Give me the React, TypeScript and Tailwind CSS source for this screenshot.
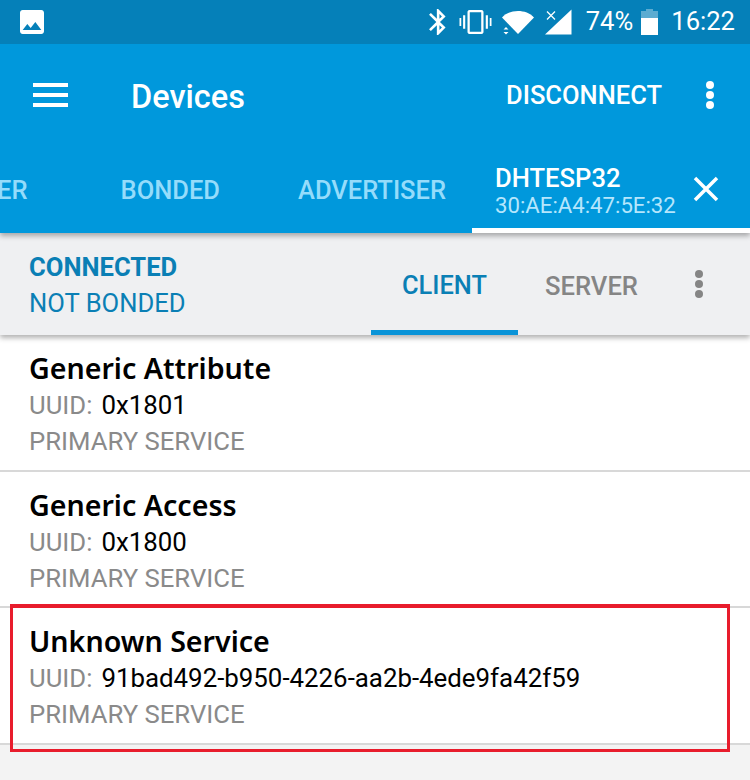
import React from 'react';

interface Service {
  name: string;
  uuid: string;
}

const services: Service[] = [
  { name: 'Generic Attribute', uuid: '0x1801' },
  { name: 'Generic Access', uuid: '0x1800' },
  { name: 'Unknown Service', uuid: '91bad492-b950-4226-aa2b-4ede9fa42f59' },
];

const Kebab: React.FC<{ className: string }> = ({ className }) => (
  <svg width="10" height="30" viewBox="0 0 10 30" className={className} fill="currentColor">
    <circle cx="5" cy="5" r="4" />
    <circle cx="5" cy="15" r="4" />
    <circle cx="5" cy="25" r="4" />
  </svg>
);

const StatusBar: React.FC = () => (
  <div className="h-[44px] bg-[#0580b9] flex items-center text-white pl-[20px] pr-[15px]">
    <svg width="24" height="24" viewBox="3 3 18 18" fill="currentColor">
      <path
        fillRule="evenodd"
        d="M21 19V5c0-1.1-.9-2-2-2H5c-1.100 0-2 .9-2 2v14c0 1.100.9 2 2 2h14c1.100 0 2-.9 2-2zM8.500 13.500l2.500 3.010L14.500 12l4.500 6H5l3.500-4.500z"
      />
    </svg>
    <div className="flex-1" />
    <svg width="17" height="26" viewBox="5 2 13 20" fill="currentColor">
      <path d="M17.710 7.710L12 2h-1v7.590L6.410 5 5 6.410 10.590 12 5 17.590 6.410 19 11 14.410V22h1l5.710-5.710-4.300-4.290 4.300-4.290zM13 5.830l1.880 1.880L13 9.590V5.830zm1.880 10.460L13 18.170v-3.760l1.880 1.880z" />
    </svg>
    <svg width="33" height="24" viewBox="0 3 24 18" fill="currentColor" className="ml-[13px]">
      <path d="M0 15h1.300V9H0v6zm2.700 2H4.300V7H2.700v10zM22.700 9v6H24V9h-1.300zm-3 8h1.600V7h-1.600v10zM16.500 3h-9C6.670 3 6 3.670 6 4.500v15c0 .83.67 1.500 1.500 1.500h9c.83 0 1.500-.67 1.500-1.500v-15c0-.83-.67-1.500-1.500-1.500zM16.300 19.300H7.700V4.700h8.600v14.600z" />
    </svg>
    <svg width="32" height="25" viewBox="0 0 32 25" fill="currentColor" className="ml-[10px]">
      <path d="M0 7.500C4 3 10 1 16 1s12 2 16 6.500L16 24 8 15.800z" />
      <path d="M1.500 18.500h5l-2.500-2.500zM1.500 21h5l-2.500 2.500z" transform="translate(0 1)" />
    </svg>
    <svg width="27" height="26" viewBox="0 0 27 26" fill="currentColor" className="ml-[11px]">
      <path d="M26.500 0.500V25.500H0z" />
      <path d="M2 2.500l8 8M10 2.500l-8 8" stroke="#0580b9" strokeWidth="3.500" />
      <path d="M2 2.500l8 8M10 2.500l-8 8" stroke="white" strokeWidth="1.300" />
    </svg>
    <span className="ml-[14px] text-[25.600px] leading-none">74%</span>
    <svg width="17" height="26" viewBox="0 0 17 26" className="ml-[8px]">
      <path d="M5 0h7v2h5v7H0V2h5z" fill="white" fillOpacity="0.35" />
      <path d="M0 9h17v17H0z" fill="white" />
    </svg>
    <span className="ml-[13px] text-[25.600px] leading-none">16:22</span>
  </div>
);

const Toolbar: React.FC = () => (
  <div className="h-[102px] flex items-center text-white pl-[33px] pr-[35px] pb-[1px]">
    <div className="w-[35px] flex flex-col gap-[6px]">
      <div className="h-[4px] bg-white" />
      <div className="h-[4px] bg-white" />
      <div className="h-[4px] bg-white" />
    </div>
    <h1 className="ml-[63px] mt-[5px] text-[32.500px] leading-none font-medium">Devices</h1>
    <div className="flex-1" />
    <span className="mt-[3px] text-[25.500px] leading-none font-medium">DISCONNECT</span>
    <Kebab className="ml-[43px] text-white" />
  </div>
);

const Tabs: React.FC = () => (
  <div className="h-[87px] flex justify-end overflow-hidden">
    <div className="shrink-0 flex items-center pt-[2px] pr-[93px] text-[25.500px] font-medium text-[#95dcfb]">SCANNER</div>
    <div className="shrink-0 flex items-center pt-[2px] pr-[78px] text-[25.500px] font-medium text-[#95dcfb]">BONDED</div>
    <div className="shrink-0 flex items-center pt-[2px] pr-[26px] text-[25.500px] font-medium text-[#95dcfb]">ADVERTISER</div>
    <div className="shrink-0 w-[278px] h-full flex items-center border-b-[5px] border-white pl-[23px] pr-[31px]">
      <div className="flex-1 pt-[8px]">
        <div className="text-[25.600px] leading-[28px] font-medium text-white">DHTESP32</div>
        <div className="text-[22.200px] leading-[26px] text-[#b5e6fc]">30:AE:A4:47:5E:32</div>
      </div>
      <svg width="26" height="26" viewBox="0 0 26 26" stroke="white" strokeWidth="3.500" className="mt-[3px]">
        <path d="M2 2l22 22M24 2L2 24" />
      </svg>
    </div>
  </div>
);

const ConnectionBar: React.FC = () => (
  <div className="relative z-10 h-[102px] bg-[#eff0f2] flex shadow-[0_3px_5px_rgba(0,0,0,0.3)] pl-[29px]">
    <div className="w-[342px] pt-[16px] text-[#0a7fb5] text-[25.600px]">
      <div className="leading-[36px] font-bold">CONNECTED</div>
      <div className="leading-[36px]">NOT BONDED</div>
    </div>
    <div className="w-[147px] flex items-center justify-center pt-[8px] border-b-[5px] border-[#0a94d8] text-[25.400px] font-medium text-[#0a7fb5]">
      CLIENT
    </div>
    <div className="w-[147px] flex items-center justify-center pt-[5px] text-[25.600px] font-medium text-[#858585]">
      SERVER
    </div>
    <div className="flex items-center pl-[29px]">
      <Kebab className="text-[#858585]" />
    </div>
  </div>
);

const ServiceRow: React.FC<{ service: Service }> = ({ service }) => (
  <div className="h-[136.500px] bg-white border-b-2 border-[#d8d8d8] pl-[29px] pt-[14px]">
    <div className="text-[28.600px] leading-[38px] font-semibold text-black font-['Noto_Sans',sans-serif]">
      {service.name}
    </div>
    <div className="text-[25.700px] leading-[36px]">
      <span className="text-[#8a8a8a]">UUID:</span>
      <span className="ml-[9px] text-[25.850px] text-black">{service.uuid}</span>
    </div>
    <div className="text-[25.700px] leading-[36px] text-[#8a8a8a]">PRIMARY SERVICE</div>
  </div>
);

export default function App() {
  return (
    <div className="relative w-[750px] h-[780px] overflow-hidden bg-[#f3f3f3] font-['Roboto',sans-serif]">
      <div className="relative z-20 bg-[#0098dc] shadow-[0_3px_5px_rgba(0,0,0,0.3)]">
        <StatusBar />
        <Toolbar />
        <Tabs />
      </div>
      <ConnectionBar />
      {services.map((s) => (
        <ServiceRow key={s.name} service={s} />
      ))}
      {/* annotation drawn on top of the screenshot */}
      <div className="absolute z-30 left-[10px] top-[604px] w-[720px] h-[148px] border-[3px] border-t-4 border-[#e81c2c]" />
    </div>
  );
}
